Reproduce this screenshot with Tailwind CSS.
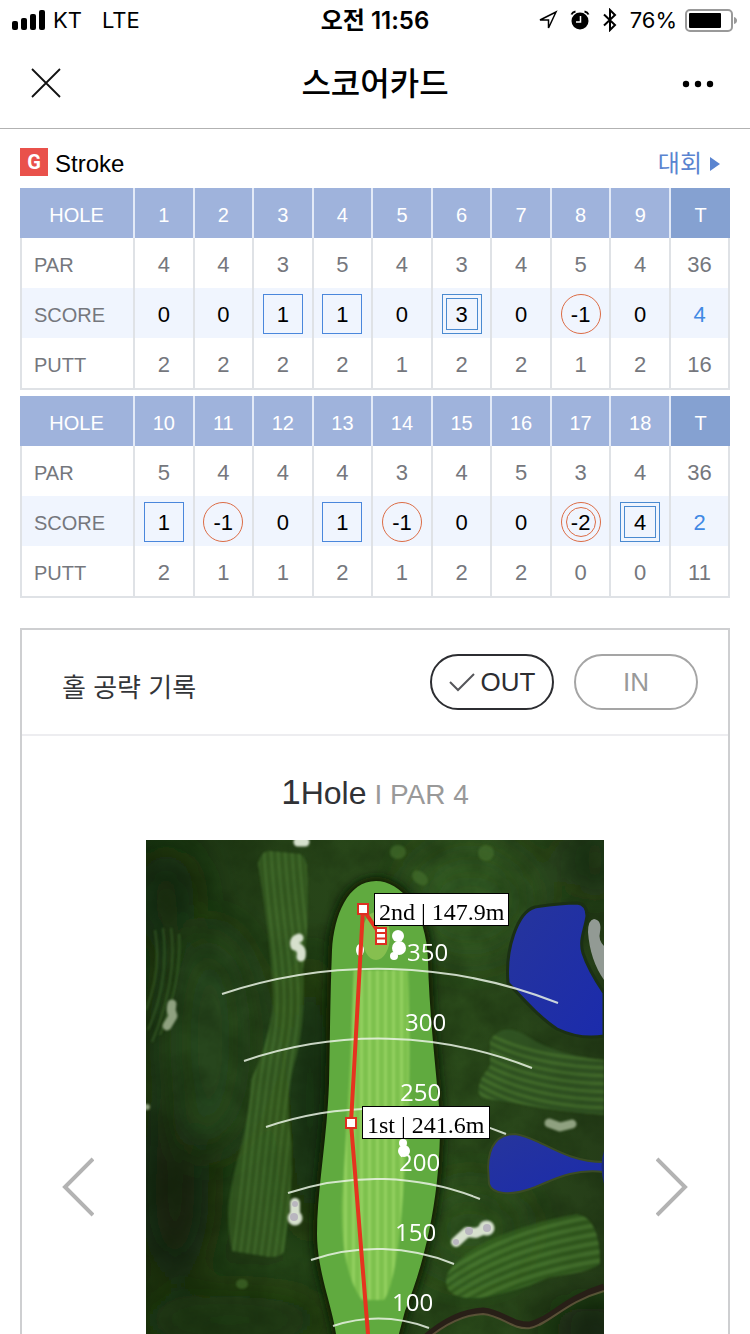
<!DOCTYPE html>
<html lang="ko">
<head>
    <meta charset="UTF-8">
    <meta name="viewport" content="width=device-width, initial-scale=1.0">
    <title>스코어카드</title>
    <script src="https://cdn.jsdelivr.net/npm/@tailwindcss/browser@4"></script>
</head>
<body class="flex h-screen flex-col bg-white font-['Liberation_Sans','Noto_Sans_CJK_KR',sans-serif] text-black">
    <!-- Status bar -->
    <div class="grid h-10 shrink-0 grid-cols-3 items-center px-3 font-[Inter,'Noto_Sans_CJK_KR',sans-serif] text-[22px]">
        <div class="flex items-center gap-2">
            <svg class="h-5 w-[33px]" viewBox="0 0 33 20" aria-hidden="true">
                <rect x="0" y="11" width="6" height="9" rx="2"/>
                <rect x="9" y="8" width="6" height="12" rx="2"/>
                <rect x="18" y="4" width="6" height="16" rx="2"/>
                <rect x="27" y="0" width="6" height="20" rx="2"/>
            </svg>
            <span>KT</span>
            <span class="ml-3">LTE</span>
        </div>
        <div class="pt-0.5 text-center text-2xl font-semibold">오전 11:56</div>
        <div class="flex items-center justify-end gap-2">
            <svg class="h-5 w-5" viewBox="0 0 20 20" fill="none" stroke="#000" stroke-width="1.5" aria-hidden="true">
                <path d="M18 2 L2 10 H10.500 V18 Z" stroke-linejoin="miter"/>
            </svg>
            <svg class="ml-1 h-5 w-5" viewBox="0 0 20 20" aria-hidden="true">
                <circle cx="10" cy="11" r="8.500"/>
                <path d="M1.500 4.500 Q2.500 2 5.500 1.500 M18.500 4.500 Q17.500 2 14.500 1.500" fill="none" stroke="#000" stroke-width="2"/>
                <path d="M10.500 6 V12 H6" fill="none" stroke="#fff" stroke-width="1.500"/>
            </svg>
            <svg class="ml-1 h-6 w-4" viewBox="0 0 16 24" fill="none" stroke="#000" stroke-width="2" aria-hidden="true">
                <path d="M2 6.500 L13 17 L8 22 V2 L13 7 L2 17.500"/>
            </svg>
            <span class="ml-1">76%</span>
            <svg class="h-6 w-[53px]" viewBox="0 0 53 24" aria-hidden="true">
                <rect x="1" y="2" width="46" height="21" rx="4" fill="none" stroke="#999" stroke-width="2"/>
                <rect x="4" y="5" width="32" height="15" rx="1"/>
                <path d="M49 9 Q52 10 52 12.500 Q52 15 49 16 Z" fill="#999"/>
            </svg>
        </div>
    </div>

    <!-- Title bar -->
    <header class="flex h-[89px] shrink-0 items-center justify-between border-b border-[#b2b2b2] px-[30px]">
        <button type="button" aria-label="닫기" class="h-8 w-11">
            <svg class="h-8 w-8" viewBox="0 0 32 32" fill="none" stroke="#111" stroke-width="1.800" aria-hidden="true">
                <path d="M2 1 L30 29 M30 1 L2 29"/>
            </svg>
        </button>
        <h1 class="text-[32px] leading-10 font-medium">스코어카드</h1>
        <button type="button" aria-label="더보기" class="h-8 w-11">
            <svg class="h-8 w-11" viewBox="0 0 44 32" aria-hidden="true">
                <circle cx="10" cy="16" r="3.200"/>
                <circle cx="22" cy="16" r="3.200"/>
                <circle cx="34" cy="16" r="3.200"/>
            </svg>
        </button>
    </header>

    <main class="flex-1 overflow-y-auto px-5 pt-[19px] [scrollbar-width:none]">
        <!-- Game type -->
        <div class="flex h-10 items-start justify-between">
            <div class="flex items-start gap-[7px]">
                <span class="flex h-7 w-7 items-center justify-center bg-[#e9514b] font-[Roboto,sans-serif] text-xl leading-7 font-bold text-white">G</span>
                <span class="text-2xl leading-8">Stroke</span>
            </div>
            <a href="#" class="flex items-center gap-2 pr-[10px] text-2xl leading-8 text-[#5a84d0]">대회
                <svg class="h-[14px] w-[10px]" viewBox="0 0 10 14" fill="#5a84d0" aria-hidden="true"><path d="M0 0 L10 7 L0 14 Z"/></svg>
            </a>
        </div>

        <!-- Scores -->
        <div class="space-y-[6px]">
            <table id="out-table" class="w-full table-fixed border-separate border-spacing-0 text-[22px] leading-7 text-[#75777d]"></table>
            <table id="in-table" class="w-full table-fixed border-separate border-spacing-0 text-[22px] leading-7 text-[#75777d]"></table>
        </div>

        <!-- Hole record -->
        <section class="mt-[30px] border-2 border-[#cecfd1]">
            <div class="flex h-[106px] items-center justify-between border-b-2 border-[#ededf0] pr-[30px] pl-10">
                <h2 class="pt-3 text-[26px] leading-8 text-[#333538]">홀 공략 기록</h2>
                <div class="flex gap-5">
                    <button type="button" class="flex h-14 w-[124px] items-center justify-center gap-[6px] rounded-full border-2 border-[#2c2d31] text-[26px] text-[#2c2d31]">
                        <svg class="h-5 w-[26px]" viewBox="0 0 26 20" fill="none" stroke="#55565a" stroke-width="2" aria-hidden="true"><path d="M1 10 L9 18 L25 2"/></svg>OUT
                    </button>
                    <button type="button" class="h-14 w-[124px] rounded-full border-2 border-[#a5a5a5] text-[26px] text-[#999]">IN</button>
                </div>
            </div>

            <h3 class="flex h-[104px] items-baseline justify-center gap-2 pt-9 text-[32px] leading-10 text-[#303236]">
                <span><span class="text-[35px]">1</span>Hole</span>
                <span class="text-[28px] text-[#999]">I PAR 4</span>
            </h3>

            <div class="flex items-center justify-between px-10">
                <button type="button" aria-label="이전 홀" class="w-8">
                    <svg class="h-[60px] w-8" viewBox="0 0 32 60" fill="none" stroke="#b3b3b3" stroke-width="4" aria-hidden="true"><path d="M31 2 L3 30 L31 58"/></svg>
                </button>

                <svg class="h-[694px] w-[458px]" viewBox="146 840 458 694" role="img" aria-label="1번 홀 공략도">
                    <defs>
                        <filter id="soft" x="-30%" y="-30%" width="160%" height="160%"><feGaussianBlur stdDeviation="5"/></filter>
                        <filter id="haze" x="-50%" y="-50%" width="200%" height="200%"><feGaussianBlur stdDeviation="22"/></filter>
                        <filter id="edge" x="-20%" y="-20%" width="140%" height="140%"><feGaussianBlur stdDeviation="1"/></filter>
                        <filter id="grass" x="0" y="0" width="100%" height="100%" color-interpolation-filters="sRGB">
                            <feTurbulence type="fractalNoise" baseFrequency="0.03" numOctaves="5" seed="4"/>
                            <feColorMatrix values="0 0 0 0 0.05  0 0 0 0 0.11  0 0 0 0 0.02  0 1.4 0 0 -0.45"/>
                        </filter>
                        <linearGradient id="rough" x1="0" x2="1">
                            <stop offset="0" stop-color="#1a3111"/>
                            <stop offset="0.3" stop-color="#264318"/>
                            <stop offset="0.7" stop-color="#2b4b1b"/>
                            <stop offset="1" stop-color="#253d18"/>
                        </linearGradient>
                        <linearGradient id="lake" x1="0" y1="0" x2="1" y2="1">
                            <stop offset="0" stop-color="#26359c"/>
                            <stop offset="1" stop-color="#1b2bac"/>
                        </linearGradient>
                        <pattern id="mow" width="8" height="20" patternUnits="userSpaceOnUse">
                            <rect width="8" height="20" fill="#7dc14d"/>
                            <rect width="3" height="20" fill="#93d05e"/>
                        </pattern>
                        <path id="fairway" d="M336 1334 C332 1305 317 1270 317 1234 C317 1190 327 1140 329 1083 C330 1045 330 1000 332 950 C334 915 348 881 376 881 C400 881 427 910 428 960 C429 1010 436 1070 440 1117 C441 1180 430 1250 405 1311 L396 1345 V1534 H345 Z"/>
                        <clipPath id="leftStrip"><path d="M258 863 Q262 850 270 851 L300 854 Q307 858 307 870 Q310 920 303 969 Q306 1020 296 1058 Q284 1095 292 1144 Q292 1200 284 1252 Q278 1259 264 1256 L232 1251 Q226 1220 229 1200 Q234 1170 240 1151 Q250 1110 251 1080 Q270 1040 273 1003 Q272 960 265 910 Z"/></clipPath>
                        <clipPath id="upperStrip"><path d="M490 1040 Q504 1020 530 1038 Q560 1056 604 1060 V1115 Q560 1112 520 1104 L482 1098 Q472 1088 490 1066 Z"/></clipPath>
                        <clipPath id="lowerStrip"><path d="M446 1281 Q446 1264 487 1241 Q530 1222 577 1214 Q600 1218 600 1264 Q590 1272 550 1277 Q520 1290 487 1297 Q446 1302 446 1281 Z"/></clipPath>
                        <path id="leftLine" d="M262 850 C266 930 282 985 272 1040 C260 1100 256 1180 244 1262"/>
                        <path id="upperLine" d="M470 1015 Q520 1050 610 1052"/>
                        <path id="lowerLine" d="M440 1270 Q500 1222 610 1206"/>
                    </defs>

                    <rect x="146" y="840" width="458" height="694" fill="url(#rough)"/>
                    <g filter="url(#haze)">
                        <ellipse cx="175" cy="1190" rx="34" ry="90" fill="#16240b"/>
                        <ellipse cx="166" cy="900" rx="28" ry="50" fill="#172a0e"/>
                        <ellipse cx="310" cy="1100" rx="20" ry="150" fill="#182d0f"/>
                        <ellipse cx="210" cy="1040" rx="40" ry="110" fill="#26461a"/>
                        <ellipse cx="470" cy="900" rx="60" ry="50" fill="#315a23"/>
                        <ellipse cx="470" cy="1230" rx="50" ry="40" fill="#2f521d"/>
                        <ellipse cx="595" cy="860" rx="30" ry="26" fill="#1f3216"/>
                        <ellipse cx="590" cy="1330" rx="40" ry="24" fill="#111c09"/>
                        <ellipse cx="230" cy="1320" rx="100" ry="24" fill="#1b3411"/>
                    </g>
                    <rect x="146" y="840" width="458" height="694" filter="url(#grass)" opacity="0.4"/>

                    <!-- Neighbouring fairways -->
                    <g filter="url(#edge)" opacity="0.6">
                        <g clip-path="url(#leftStrip)" fill="none" stroke="#57893a" stroke-width="2">
                            <rect x="220" y="845" width="95" height="420" fill="#3d6827" stroke="none"/>
                            <use href="#leftLine" x="-12"/><use href="#leftLine" x="-5"/><use href="#leftLine" x="2"/><use href="#leftLine" x="9"/>
                            <use href="#leftLine" x="16"/><use href="#leftLine" x="23"/><use href="#leftLine" x="30"/><use href="#leftLine" x="37"/><use href="#leftLine" x="44"/>
                        </g>
                    </g>
                    <g filter="url(#edge)" opacity="0.55">
                        <g clip-path="url(#upperStrip)" fill="none" stroke="#578a39" stroke-width="3">
                            <rect x="470" y="1015" width="140" height="110" fill="#37602a" stroke="none"/>
                            <use href="#upperLine" y="8"/><use href="#upperLine" y="16"/><use href="#upperLine" y="24"/><use href="#upperLine" y="32"/>
                            <use href="#upperLine" y="40"/><use href="#upperLine" y="48"/><use href="#upperLine" y="56"/><use href="#upperLine" y="64"/><use href="#upperLine" y="72"/>
                        </g>
                    </g>
                    <g filter="url(#edge)" opacity="0.6">
                        <g clip-path="url(#lowerStrip)" fill="none" stroke="#558c39" stroke-width="4">
                            <rect x="440" y="1205" width="170" height="100" fill="#386824" stroke="none"/>
                            <use href="#lowerLine" y="8"/><use href="#lowerLine" y="17"/><use href="#lowerLine" y="26"/><use href="#lowerLine" y="35"/>
                            <use href="#lowerLine" y="44"/><use href="#lowerLine" y="53"/><use href="#lowerLine" y="62"/><use href="#lowerLine" y="71"/>
                        </g>
                    </g>
                    <g fill="none" stroke="#3a6229" stroke-width="2" opacity="0.7" filter="url(#edge)">
                        <path d="M155 930 Q162 970 146 1010 M163 928 Q170 980 148 1030 M171 928 Q178 980 152 1042 M179 934 Q182 980 160 1035"/>
                    </g>
                    <g fill="#46722d" filter="url(#edge)" opacity="0.6">
                        <ellipse cx="398" cy="852" rx="8" ry="7"/>
                        <ellipse cx="486" cy="853" rx="8" ry="8"/>
                        <ellipse cx="420" cy="878" rx="9" ry="6" transform="rotate(40 420 878)"/>
                        <ellipse cx="242" cy="1284" rx="6" ry="5"/>
                    </g>

                    <!-- Water -->
                    <path d="M508 983 C505 950 517 912 535 907 Q560 903 577 903 Q587 904 587 916 C585 930 579 940 583 953 Q588 969 604 993 V1036 Q580 1040 557 1029 C540 1018 524 1000 508 983 Z" fill="url(#lake)" stroke="#1b3014" stroke-width="3"/>
                    <path d="M488 1167 C489 1140 502 1134 515 1134 C540 1137 562 1162 604 1162 V1172 C570 1168 550 1182 530 1189 C510 1196 492 1194 489 1184 Z" fill="url(#lake)" stroke="#3b4c24" stroke-width="2"/>
                    <path d="M604 1151 Q599 1165 604 1184 Z" fill="#1c2a78"/>
                    <path d="M594 919 Q588 920 588 932 Q590 960 604 980 V946 Q598 940 600 932 Q602 920 594 919 Z" fill="#929a94"/>
                    <path d="M425 1338 Q455 1312 483 1311 C503 1313 512 1326 530 1325 C550 1321 565 1299 604 1287" fill="none" stroke="#281f17" stroke-width="7"/>
                    <path d="M425 1341 Q455 1315 483 1314 C503 1316 512 1330 530 1328 C550 1324 565 1302 604 1291" fill="none" stroke="#6d6544" stroke-width="2" opacity="0.7"/>

                    <!-- Bunkers -->
                    <g fill="none" stroke="#d6e0cd" stroke-linecap="round" stroke-linejoin="round" filter="url(#edge)">
                        <path d="M298 842 H305" stroke-width="9"/>
                        <path d="M299 938 Q293 940 295 946 Q303 948 301 957" stroke-width="9"/>
                        <path d="M295 1203 V1219" stroke-width="10"/>
                        <circle cx="295" cy="1218" r="3" stroke-width="9"/>
                        <path d="M456 1242 L467 1232 L476 1233 L487 1228" stroke-width="10"/>
                        <path d="M486 1228 h1" stroke-width="15"/>
                    </g>
                    <g fill="none" stroke="#8fa180" stroke-linecap="round" stroke-linejoin="round" filter="url(#edge)">
                        <path d="M172 1004 Q170 1010 173 1016 L167 1026" stroke-width="9"/>
                        <path d="M549 1123 L560 1127 L572 1124" stroke-width="9"/>
                        <path d="M146 1107 h1" stroke-width="6"/>
                    </g>
                    <g fill="#b9b6bf">
                        <circle cx="294" cy="1217" r="4"/><circle cx="295" cy="1204" r="3"/>
                        <circle cx="487" cy="1228" r="4"/><circle cx="469" cy="1231" r="4"/><circle cx="456" cy="1242" r="3"/>
                    </g>

                    <!-- Main fairway -->
                    <use href="#fairway" fill="#0b1a06" stroke="#0b1a06" stroke-width="8" filter="url(#soft)"/>
                    <use href="#fairway" fill="#60aa3f"/>
                    <ellipse cx="376" cy="936" rx="14" ry="24" fill="#86bf4f"/>
                    <path d="M354 970 H408 Q412 1100 404 1180 Q398 1280 384 1300 H362 Q340 1270 342 1200 Q350 1080 354 970 Z" fill="url(#mow)" filter="url(#edge)"/>
                    <g fill="#fff">
                        <circle cx="398" cy="936" r="6"/><circle cx="399" cy="948" r="7"/><circle cx="394" cy="956" r="4"/>
                        <ellipse cx="360" cy="950" rx="4" ry="6"/>
                        <circle cx="403" cy="1143" r="4"/><circle cx="404" cy="1151" r="6"/>
                    </g>

                    <!-- Distance arcs -->
                    <g fill="none" stroke="#e9f2e4" stroke-opacity="0.85" stroke-width="2">
                        <path d="M222 994 A493 493 0 0 1 558 1003"/>
                        <path d="M244 1061 A415 415 0 0 1 532 1068"/>
                        <path d="M266 1127 A345 345 0 0 1 506 1134"/>
                        <path d="M288 1193 A281 281 0 0 1 480 1199"/>
                        <path d="M311 1260 A205 205 0 0 1 454 1264"/>
                        <path d="M333 1326 A145 145 0 0 1 429 1328"/>
                    </g>
                    <g class="font-['Open_Sans',sans-serif] text-2xl" fill="#fff">
                        <text x="407" y="961">350</text>
                        <text x="405" y="1031">300</text>
                        <text x="400" y="1101">250</text>
                        <text x="399" y="1171">200</text>
                        <text x="395" y="1241">150</text>
                        <text x="392" y="1311">100</text>
                    </g>

                    <!-- Shots -->
                    <path d="M381 936 L363 909 L351 1123 L368 1334 L376 1434" fill="none" stroke="#e5331f" stroke-width="4"/>
                    <g fill="#fff" stroke="#dd2f20" stroke-width="2">
                        <rect x="358" y="904" width="10" height="10"/>
                        <rect x="346" y="1118" width="10" height="10"/>
                        <rect x="376" y="928" width="10" height="11"/>
                        <rect x="376" y="933" width="10" height="11"/>
                        <path d="M376 938.500 H386"/>
                    </g>
                    <g class="font-['Liberation_Serif',serif] text-2xl">
                        <rect x="374.500" y="893.500" width="134" height="32" fill="#fff" stroke="#000"/>
                        <text x="379" y="920">2nd | 147.9m</text>
                        <rect x="362.500" y="1106.500" width="127" height="32" fill="#fff" stroke="#000"/>
                        <text x="367" y="1133">1st | 241.6m</text>
                    </g>
                </svg>

                <button type="button" aria-label="다음 홀" class="w-8">
                    <svg class="h-[60px] w-8" viewBox="0 0 32 60" fill="none" stroke="#b3b3b3" stroke-width="4" aria-hidden="true"><path d="M1 2 L29 30 L1 58"/></svg>
                </button>
            </div>
        </section>
    </main>

    <script>
        const cards = {
            'out-table': {
                hole: [1, 2, 3, 4, 5, 6, 7, 8, 9, 'T'],
                par: [4, 4, 3, 5, 4, 3, 4, 5, 4, 36],
                score: [0, 0, 1, 1, 0, 3, 0, -1, 0, 4],
                putt: [2, 2, 2, 2, 1, 2, 2, 1, 2, 16]
            },
            'in-table': {
                hole: [10, 11, 12, 13, 14, 15, 16, 17, 18, 'T'],
                par: [5, 4, 4, 4, 3, 4, 5, 3, 4, 36],
                score: [1, -1, 0, 1, -1, 0, 0, -2, 4, 2],
                putt: [2, 1, 1, 2, 1, 2, 2, 0, 0, 11]
            }
        };

        // Bogeys are boxed, birdies are circled, doubled from two strokes on
        function scoreMark(n) {
            const base = 'mx-auto flex h-10 w-10 items-center justify-center ';
            if (n === 0) return `<span class="${base} pt-0.5">0</span>`;
            if (n === 1) return `<span class="${base} border border-[#4a87dc] pt-0.5">1</span>`;
            if (n === -1) return `<span class="${base} rounded-full border border-[#dc6c45] pt-0.5">-1</span>`;
            if (n < -1) return `<span class="${base} rounded-full border border-[#dc6c45]"><span class="flex h-[30px] w-[30px] items-center justify-center rounded-full border border-[#dc6c45] pt-0.5">${n}</span></span>`;
            return `<span class="${base} border border-[#4a8ad0]"><span class="flex h-8 w-8 items-center justify-center border border-[#4a8ad0] pt-0.5">${n}</span></span>`;
        }

        function bodyRow(name, values, last) {
            const bottom = last ? 'h-[52px] border-b-2' : 'h-[50px]';
            const cells = values.map((v, i) => `<td class="${bottom} border-l-2 border-[#dfe2e6] p-0 pt-1 text-center ${i === 9 ? 'border-r-2' : ''}">${v}</td>`).join('');
            return `<tr><th scope="row" class="${bottom} border-l-2 border-[#dfe2e6] p-0 pt-1 pl-3 text-left text-xl font-normal">${name}</th>${cells}</tr>`;
        }

        for (const [id, card] of Object.entries(cards)) {
            const heads = card.hole.map((h, i) => `<th scope="col" class="h-[50px] border-l-2 border-[#e3eaf7] p-0 pt-1 font-normal ${i === 9 ? 'bg-[#85a1d1]' : 'bg-[#9fb3dc]'}">${h}</th>`).join('');
            const scores = card.score.map((s, i) => i === 9
                ? `<td class="h-[50px] border-x-2 border-[#dfe2e6] p-0 pt-1 text-center text-[#4189e4]">${s}</td>`
                : `<td class="h-[50px] border-l-2 border-[#dfe2e6] p-0 pt-0.5 text-center text-black">${scoreMark(s)}</td>`).join('');
            document.getElementById(id).innerHTML = `
                <colgroup><col class="w-[113px]"><col span="9"><col class="w-[61px]"></colgroup>
                <thead><tr class="text-xl text-white"><th scope="col" class="h-[50px] bg-[#9fb3dc] p-0 pt-1 font-normal">HOLE</th>${heads}</tr></thead>
                <tbody>
                    ${bodyRow('PAR', card.par, false)}
                    <tr class="bg-[#f0f5fe]"><th scope="row" class="h-[50px] border-l-2 border-[#dfe2e6] p-0 pt-1 pl-3 text-left text-xl font-normal">SCORE</th>${scores}</tr>
                    ${bodyRow('PUTT', card.putt, true)}
                </tbody>`;
        }
    </script>
</body>
</html>
